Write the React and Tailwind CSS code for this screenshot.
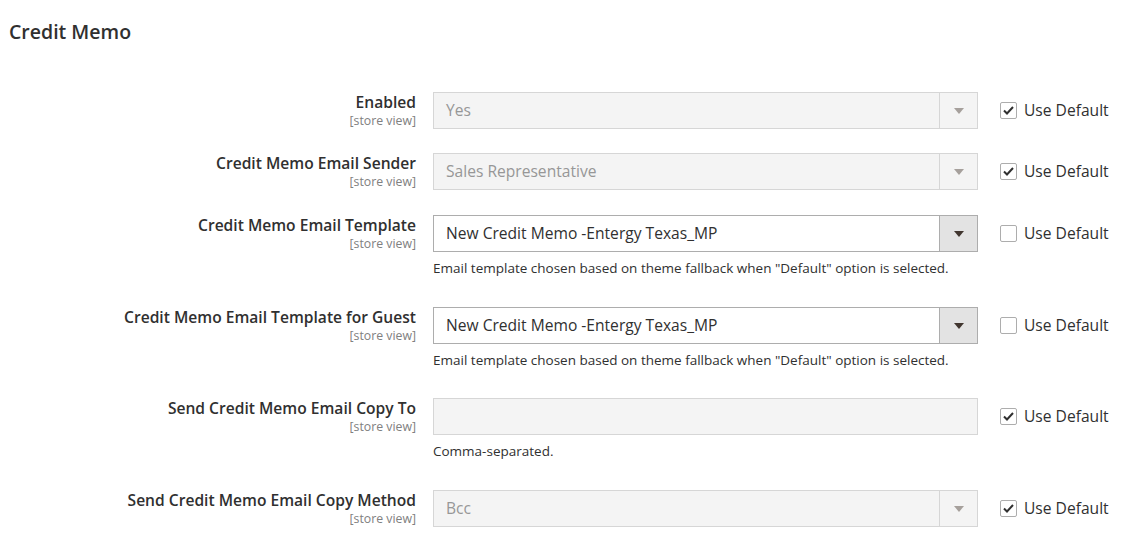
import React from "react";

function Arrow({ disabled }) {
  return (
    <svg width="10" height="6" viewBox="0 0 10 6">
      <path d="M0 0 L10 0 L5 6 Z" fill={disabled ? "#a6a09c" : "#41362f"} />
    </svg>
  );
}

function Checkbox({ checked }) {
  return (
    <div className="flex items-center">
      <div className="w-[17px] h-[17px] border border-[#adadad] rounded-[2px] bg-white flex items-center justify-center">
        {checked && (
          <svg width="11" height="9" viewBox="0 0 11 9">
            <path d="M1 4.5 L4 7.5 L10 1" fill="none" stroke="#303030" strokeWidth="2" />
          </svg>
        )}
      </div>
      <span className="ml-[7px] text-[15.6px] text-[#303030] leading-[20px] -mt-[1px]">Use Default</span>
    </div>
  );
}

function Select({ value, disabled }) {
  return (
    <div
      className={
        "flex h-[37px] w-[545px] border " +
        (disabled ? "border-[#d6d6d6] bg-[#f4f4f4]" : "border-[#adadad] bg-white")
      }
    >
      <div
        className={
          "flex-1 flex items-center pl-[12px] text-[15.6px] " +
          (disabled ? "text-[#979797]" : "text-[#303030]")
        }
      >
        {value}
      </div>
      <div
        className={
          "w-[38px] flex items-center justify-center border-l " +
          (disabled ? "border-[#d6d6d6]" : "border-[#adadad] bg-[#e3e3e3]")
        }
      >
        <Arrow disabled={disabled} />
      </div>
    </div>
  );
}

function Input() {
  return <div className="h-[37px] w-[545px] border border-[#d6d6d6] bg-[#f4f4f4]" />;
}

function Row({ label, children, note, checked, mb }) {
  return (
    <div className={"flex " + mb}>
      <div className="w-[416px] text-right flex flex-col items-end">
        <div className="text-[15.6px] font-semibold text-[#303030] leading-[20px]">{label}</div>
        <div className="mt-[2px] text-[12.3px] text-[#808080] leading-[13px]">[store view]</div>
      </div>
      <div className="ml-[17px] w-[545px]">
        {children}
        {note && (
          <div className="mt-[7px] text-[13.5px] text-[#303030] leading-[18px]">{note}</div>
        )}
      </div>
      <div className="ml-[22px] h-[37px] flex items-center">
        <Checkbox checked={checked} />
      </div>
    </div>
  );
}

export default function App() {
  const note = 'Email template chosen based on theme fallback when "Default" option is selected.';
  return (
    <div className="w-[1133px] h-[544px] bg-white overflow-hidden" style={{ fontFamily: '"Open Sans", sans-serif' }}>
      <div className="pl-[9px] pt-[19px] text-[19.5px] font-semibold text-[#303030] leading-[26px]">
        Credit Memo
      </div>
      <div className="mt-[47px]">
        <Row label="Enabled" checked mb="mb-[24px]">
          <Select value="Yes" disabled />
        </Row>
        <Row label="Credit Memo Email Sender" checked mb="mb-[25px]">
          <Select value="Sales Representative" disabled />
        </Row>
        <Row label="Credit Memo Email Template" note={note} mb="mb-[30px]">
          <Select value="New Credit Memo -Entergy Texas_MP" />
        </Row>
        <Row label="Credit Memo Email Template for Guest" note={note} mb="mb-[29px]">
          <Select value="New Credit Memo -Entergy Texas_MP" />
        </Row>
        <Row label="Send Credit Memo Email Copy To" note="Comma-separated." checked mb="mb-[30px]">
          <Input />
        </Row>
        <Row label="Send Credit Memo Email Copy Method" checked mb="mb-[24px]">
          <Select value="Bcc" disabled />
        </Row>
      </div>
    </div>
  );
}
